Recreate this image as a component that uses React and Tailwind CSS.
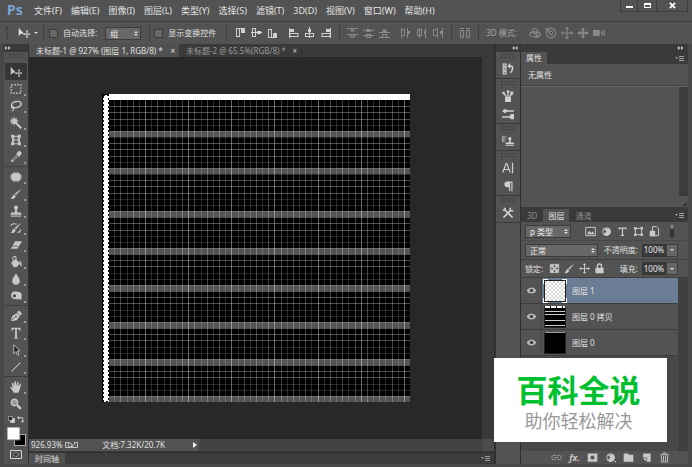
import { clsx } from "clsx";
import { useState } from "react";

const Icon = ({ children, className = "", box = 16 }) => (
  <svg viewBox={`0 0 ${box} ${box}`} fill="none" stroke="currentColor" strokeWidth="1.4" className={clsx("shrink-0", className)} aria-hidden="true">
    {children}
  </svg>
);

const solid = { fill: "currentColor", stroke: "none" };

const MovePath = () => (
  <>
    <path {...solid} d="M1 1v11l3-3h4z" />
    <path d="M12 5.500v8M8 9.500h8" strokeWidth="1.200" />
    <path {...solid} d="M12 4l1.800 2h-3.600zM12 15l1.800-2h-3.600zM6.800 9.500l2-1.800v3.600zM16 9.500l-1.500-1.800v3.600z" />
  </>
);
const BrushPath = () => <><path {...solid} d="M15.500 .5L8 9.500l-1.800-1.700z" /><path {...solid} d="M5.500 8.500l2 2c-.5 3.500-3 4.500-7 4 2.500-1 2-4.500 5-6z" /></>;
const FramePath = () => <><path d="M3.500 3.500h9v9h-9z" /><path {...solid} d="M1.500 1.500h3.500v3.500h-3.500zM11 1.500h3.500v3.500h-3.500zM1.500 11h3.500v3.500h-3.500zM11 11h3.500v3.500h-3.500z" /></>;
const StampPath = () => <><circle {...solid} cx="8" cy="3.500" r="2.800" /><path {...solid} d="M7 5h2l.6 5H15v3H1v-3h5.400z" /><path d="M1 14.800h14" /></>;

const tools = [
  [
    ["移动", <MovePath />],
    ["选框", <rect x="1.500" y="2.500" width="13" height="11" strokeDasharray="2.500 1.500" />],
    ["套索", <><ellipse cx="8.500" cy="6" rx="6.500" ry="4" transform="rotate(-12 8.500 6)" strokeWidth="2" /><path d="M4 8.500c-3 0-2.500 3 0 2.500s1 3-1.500 4" /></>],
    ["魔棒", <><path d="M7 7l8 8" strokeWidth="2.500" /><circle {...solid} cx="5.500" cy="5.500" r="3.500" /><path d="M5.500 0v11M0 5.500h11M1.700 1.700l7.600 7.600M9.300 1.700L1.700 9.300" /></>],
    ["裁剪", <><path d="M3.500 3v10M12.500 3v10M3 3h10M3 13h10M4 8h8M6 3l-2 10M10 3l2 10" /><path {...solid} d="M1.500 1h4v4h-4zM10.500 1h4v4h-4zM1.500 11h4v4h-4zM10.500 11h4v4h-4z" /></>],
    ["吸管", <><path d="M2 14l7-7" strokeWidth="2.800" /><path {...solid} d="M8 4l4 4 1-1.500c3-2 3-4 1.500-5.500s-3.500-1-5 1.500z" /><path d="M3.500 12.500l5-5" stroke="#535353" /></>],
  ],
  [
    ["修补", <><rect {...solid} x="2" y="3" width="12" height="10" rx="3" /><path d="M1 5.500h14M0 8h16M1 10.500h14M5 1.500v13M8 1v14M11 1.500v13" /></>],
    ["画笔", <BrushPath />],
    ["图章", <StampPath />],
    ["历史画笔", <><BrushPath /><path d="M1 5c2-4 5-3 8-2M10 14c3 0 4-2 4-4" /></>],
    ["橡皮擦", <><path {...solid} d="M7 3h9l-6 10H1z" /><path d="M2.500 9.500h7.500l1.500 2" stroke="#535353" strokeWidth="1" /></>],
    ["油漆桶", <><path {...solid} d="M1.500 9l6-5 6 6-5 5H5z" /><path d="M4 7V2.500C4 0 8 0 8 2.500V7" /><path {...solid} d="M12 6c3 1 4 4 3.500 8-2 0-2-3-2-4z" /></>],
    ["模糊", <path {...solid} d="M8 0c1 4 5 6 5 10.500a5 5 0 0 1-10 0C3 6 7 4 8 0z" />],
    ["海绵", <><path {...solid} d="M6.500 2C16 2 16.500 5 15 13l-3-1c-2 1-4 0-5.500 0a5 5 0 0 1 0-10z" /><ellipse cx="6" cy="7.500" rx="1.800" ry="2" fill="#333" stroke="none" /></>],
  ],
  [
    ["钢笔", <><path {...solid} d="M1 15L3 8l6-4 4 4-4 5.500z" /><path {...solid} d="M9.500 3l2.500-2.500L16 5l-2.500 2.500z" /><path d="M2 14l5-5" stroke="#535353" strokeWidth="1" /><circle cx="8" cy="8.500" r="1.200" fill="#535353" stroke="none" /></>],
    ["文字", <path {...solid} d="M2 1h12v4h-1c-.5-2-1.500-2.500-3.800-2.500v10.500c0 1 .5 1.500 2 1.500v.8H4.800v-.8c1.500 0 2-.5 2-1.500V2.500C4.500 2.500 3.500 3 3 5H2z" />],
    ["路径选择", <path d="M5 1v12l3-3 2 5 2-.8-2-5h3.500z" fill="#222" strokeWidth="1.200" />],
    ["直线", <path d="M2 14L14 2" />],
  ],
  [
    ["抓手", <path {...solid} d="M5 15.500C3 12 1 10 0 8c.8-1 2-.5 3.500 1.500L2.500 3c.6-1 1.500-.8 2 .2l1 3.600L6 1c.6-1 1.600-1 2 0l.2 5.500L10 1.500c.6-.8 1.500-.6 1.700.3L11 7l2.500-3.500c.9-.5 1.500 0 1.300.9-1 3-1.500 8-3.800 11.100z" />],
    ["缩放", <><circle cx="6" cy="6" r="4.300" fill="#999" strokeWidth="1.800" /><path d="M9.500 9.500l5 5" strokeWidth="3" /></>],
  ],
];

const menus = ["文件(F)", "编辑(E)", "图像(I)", "图层(L)", "类型(Y)", "选择(S)", "滤镜(T)", "3D(D)", "视图(V)", "窗口(W)", "帮助(H)"];

const Toolbox = () => {
  const [active, setActive] = useState("移动");
  return (
    <aside className="flex w-6 shrink-0 flex-col items-center bg-[#535353]">
      <div className="flex h-2 w-full items-center bg-[#3a3a3a] pl-px"><Chevrons right /></div>
      <Grip />
      <div className="h-[3px]" />
      {tools.map((group, index) => (
        <div key={group[0][0]} className={clsx("w-full px-px", index > 0 && "mt-px border-t border-[#3e3e3e] pt-px")}>
          {group.map(([label, drawing]) => (
            <button key={label} aria-label={label} onClick={() => setActive(label)} className={clsx("relative flex h-[17px] w-full items-center justify-center rounded-xs", active === label ? "bg-[#363636]" : "bg-transparent")}>
              <Icon className="h-3 w-3 text-[#c8c8c8]">{drawing}</Icon>
              {!["移动", "缩放"].includes(label) && <span className="absolute right-px bottom-px h-0.5 w-0.5 bg-[#999]" />}
            </button>
          ))}
        </div>
      ))}
      <div className="mt-1 flex w-full justify-between px-1 text-[#d2d2d2]">
        <Icon className="h-[7px] w-[7px]"><path d="M6 6h9v9H6z" fill="#ddd" /><path d="M1 1h9v9H1z" fill="#222" /></Icon>
        <Icon className="h-[7px] w-[7px]"><path d="M4 4h9v9" strokeWidth="2" /><path {...solid} d="M0 4l5-4v8zM13 16l-4-5h7z" /></Icon>
      </div>
      <div className="mt-1 h-[19px] w-[19px]">
        <svg viewBox="0 0 19 19" aria-label="前景色和背景色" role="img">
          <rect x="7.500" y="7.500" width="11" height="11" fill="#000" stroke="#aaa" />
          <rect width="13" height="13" fill="#fff" stroke="#666" />
        </svg>
      </div>
      <button aria-label="快速蒙版" className="mt-1 text-[#d2d2d2]">
        <svg viewBox="0 0 12 9" className="h-[9px] w-3" fill="none" stroke="currentColor"><path d="M.5.5h11v8H.5z" /><circle cx="6" cy="4.500" r="2" fill="#333" strokeDasharray="1 1" /></svg>
      </button>
    </aside>
  );
};

const Chevrons = ({ right }) => (
  <svg viewBox="0 0 6 4" className="h-1 w-1.5" fill="#c4c4c4">
    <path d={right ? "M0 0l2.500 2L0 4zM3 0l2.500 2L3 4z" : "M2.500 0L0 2l2.500 2zM5.500 0L3 2l2.500 2z"} />
  </svg>
);
const Grip = () => <div className="my-0.5 h-1 w-3.5 border-y border-dotted border-[#383838]" />;
const Divider = ({ className }) => <div className={clsx("h-4 w-px shrink-0 bg-[#3f3f3f]", className)} />;

const PanelMenu = () => (
  <button aria-label="面板菜单" className="ml-auto px-1">
    <svg viewBox="0 0 9 5" className="h-[5px] w-[9px]" fill="#a0a0a0"><path d="M0 1h3L1.500 3zM4 0h5v1H4zM4 2h5v1H4zM4 4h5v1H4z" /></svg>
  </button>
);

// rects are [x, y, w, h, filled]
const alignIcons = [
  { line: "M1 1.500h9", rects: [[1.5, 1.5, 3, 8], [6, 2, 4, 4, true]] },
  { line: "M0 5.500h11", rects: [[1.5, 1.5, 3, 8], [6, 4, 4, 3, true]] },
  { line: "M1 10.500h9", rects: [[1.5, 2.5, 3, 8], [6, 6, 4, 4, true]] },
  { line: "M1.500 1v10", rects: [[2, 6.5, 8, 3], [2, 2, 4, 3, true]] },
  { line: "M5.500 0v11", rects: [[1.5, 6.5, 8, 3], [4, 2, 3, 3, true]] },
  { line: "M10.500 1v10", rects: [[2, 6.5, 8, 3], [6, 2, 4, 3, true]] },
];
const distributeIcons = [
  { line: "M0 1.500h11M0 7.500h11", rects: [[3.5, 2.5, 4, 2, true], [3.5, 8, 4, 2]] },
  { line: "M0 3.500h11M0 8.500h11", rects: [[3.5, 2, 4, 3, true], [3.5, 7.5, 4, 3]] },
  { line: "M0 5.500h11M0 10.500h11", rects: [[3.5, 2.5, 4, 3, true], [3.5, 7.5, 4, 3]] },
  { line: "M1.500 1v10M7.500 1v10", rects: [[1.5, 2.5, 3, 6], [8, 4, 2, 3, true]] },
  { line: "M3.500 1v10M9.500 1v10", rects: [[1.5, 2.5, 4, 6], [8, 4, 2, 3, true]] },
  { line: "M5.500 1v10M10.500 1v10", rects: [[1.5, 2.5, 4, 6], [8, 4, 2, 3, true]] },
];

const AlignButtons = ({ icons, className }) => (
  <div className={clsx("flex gap-1", className)}>
    {icons.map(({ line, rects }, index) => (
      <button key={line} aria-label={`对齐 ${index + 1}`} className={clsx(index === 3 && "ml-[5px]")}>
        <Icon box={12} className="h-3 w-3">
          <path d={line} strokeWidth="1" />
          {rects.map(([x, y, w, h, filled]) => <rect key={`${x}-${y}`} x={x} y={y} width={w} height={h} strokeWidth={filled ? 0 : 1} fill={filled ? "currentColor" : "none"} />)}
        </Icon>
      </button>
    ))}
  </div>
);

const Select = ({ label, options, className }) => (
  <div className={clsx("relative", className)}>
    <select aria-label={label} className="h-[13px] w-full appearance-none border border-[#3c3c3c] bg-[#686868] px-1 text-[8px] leading-[11px] text-[#eee] outline-none">
      {options.map((option) => <option key={option}>{option}</option>)}
    </select>
    <svg viewBox="0 0 4 5" className="pointer-events-none absolute top-1 right-[3px] h-[5px] w-1" fill="#ddd"><path d="M0 2l2-2 2 2zM0 3h4L2 5z" /></svg>
  </div>
);

const Check = ({ label }) => (
  <label className="flex items-center gap-[5px] whitespace-nowrap">
    <input type="checkbox" className="h-[9px] w-[9px] appearance-none border border-[#3b3b3b] bg-[#686868] checked:bg-[#ccc]" />
    {label}
  </label>
);

const MenuBar = () => (
  <header className="flex h-[22px] shrink-0 border-b border-[#3c3c3c]">
    <div className="w-[34px] pl-[7px] text-[14px] leading-5 font-bold text-[#78a5d1]">Ps</div>
    <nav className="flex items-center gap-[9px] text-[9px] text-[#e4e4e4]">
      {menus.map((menu) => <button key={menu} className="whitespace-nowrap">{menu}</button>)}
    </nav>
    <div className="mr-1 ml-auto flex h-3 text-white">
      <button aria-label="最小化" className="flex w-[18px] items-end justify-center border border-t-0 border-[#3d3d3d] pb-[3px]"><span className="h-0.5 w-[7px] bg-white" /></button>
      <button aria-label="最大化" className="flex w-[18px] items-center justify-center border-b border-[#3d3d3d]"><span className="h-[5px] w-[7px] border border-t-2 border-white" /></button>
      <button aria-label="关闭" className="flex w-8 items-center justify-center border border-t-0 border-[#3d3d3d]"><Icon box={8} className="h-[7px] w-[7px]"><path d="M1 1l6 6M7 1L1 7" strokeWidth="2" /></Icon></button>
    </div>
  </header>
);

const OptionsBar = () => (
  <div className="flex h-[22px] shrink-0 items-center overflow-hidden text-[8px] text-[#e0e0e0]">
    <div className="ml-1.5 h-3 w-0.5 border-x border-dotted border-[#3a3a3a]" />
    <button aria-label="移动工具" className="ml-2.5 flex items-center gap-1"><Icon className="h-3 w-3"><MovePath /></Icon><span className="border-x-2 border-t-2 border-x-transparent border-t-[#ddd]" /></button>
    <Divider className="mx-[5px]" />
    <Check label="自动选择:" />
    <Select label="自动选择" options={["组", "图层"]} className="ml-2 w-9" />
    <Divider className="mr-1 ml-2" />
    <Check label="显示变换控件" />
    <Divider className="mr-2 ml-2.5" />
    <AlignButtons icons={alignIcons} className="text-[#d0d0d0]" />
    <Divider className="mx-[7px]" />
    <AlignButtons icons={distributeIcons} className="text-[#8a8a8a]" />
    <Divider className="mx-[7px]" />
    <Icon box={12} className="h-3 w-3 text-[#8a8a8a]"><path d="M1.500 3.500h3v7h-3zM7.500 3.500h3v7h-3zM1 1.500h4M7 1.500h4" strokeWidth="1" /></Icon>
    <Divider className="mx-[7px]" />
    <span className="whitespace-nowrap text-[#a5a5a5]">3D 模式:</span>
    <div className="ml-3 flex gap-1 text-[#8a8a8a]">
      <Icon className="h-3 w-3"><ellipse cx="8" cy="10" rx="7" ry="3.500" /><circle cx="8" cy="5.500" r="3.500" /><path {...solid} d="M8 11l4-1v5z" /></Icon>
      <Icon className="h-3 w-3"><circle cx="8" cy="8" r="6.500" /><circle cx="8" cy="8" r="2.500" /><path {...solid} d="M0 2h5v5z" /></Icon>
      <Icon className="h-3 w-3"><path d="M8 2v12M2 8h12" /><path d="M6 3l2-2.500L10 3M6 13l2 2.500L10 13M3 6L.5 8 3 10M13 6l2.500 2L13 10" /></Icon>
      <Icon className="h-3 w-3"><path d="M8 2v12M2 8h12" strokeWidth="2" /><path {...solid} d="M8 1l3 3H5zM8 15l3-3H5zM0 8l4-3v6zM16 8l-4-3v6zM6 6h4v4H6z" /></Icon>
      <Icon className="h-3 w-3"><path {...solid} d="M0 4h9v8H0zM10 8l3-4v8z" /><path d="M15 4v8" /></Icon>
    </div>
  </div>
);

const CELLS = 50;
const CELL = 6.16;
const bands = [6, 12, 19, 25, 31, 37, 43, 49];

const Artwork = () => {
  const size = CELLS * CELL;
  const lines = Array.from({ length: CELLS - 2 }, (_, index) => Math.round((index + 2) * CELL));
  return (
    <svg viewBox={`0 0 ${size} ${size}`} className="h-[308px] w-[308px] shrink-0" shapeRendering="crispEdges" role="img" aria-label="画布">
      <rect width={size} height={size} />
      {bands.map((row) => <rect key={row} x="7" y={Math.round(row * CELL)} width={size - 7} height="6" fill="#545454" />)}
      {lines.map((at, index) => (
        <g key={at} fill="#fff">
          <rect x={at} y="6" width="1" height={size - 6} opacity={index % 7 === 5 ? 0.4 : index % 2 ? 0.26 : 0.16} />
          <rect x="7" y={at} width={size - 7} height="1" opacity={index % 6 < 3 ? 0.3 : 0.14} />
        </g>
      ))}
      <rect x="7" y="0" width={size - 7} height="6" fill="#fff" />
      <rect x="1" y="1" width="6" height={size - 1} fill="#fff" />
      <rect x="1" y="1" width="5.500" height={size - 2} fill="none" stroke="#111" strokeWidth="1" strokeDasharray="2 2" />
    </svg>
  );
};

const DocumentArea = () => (
  <main className="flex min-w-0 flex-1 flex-col bg-[#3a3a3a]">
    <div className="flex h-[13px] text-[8px] leading-[13px] whitespace-nowrap">
      <button className="flex w-[150px] justify-between bg-[#505050] pr-1 pl-[7px] text-[#e0e0e0]"><span>未标题-1 @ 927% (图层 1, RGB/8) *</span><span>×</span></button>
      <button className="flex w-[123px] justify-between border-r border-[#303030] pr-1 pl-[7px] text-[#9a9a9a]"><span>未标题-2 @ 65.5%(RGB/8) *</span><span className="text-[#ccc]">×</span></button>
    </div>
    <div className="flex min-h-0 flex-1">
      <div className="min-w-0 flex-1 overflow-hidden bg-[#282828] pt-[37px] pl-[73px]"><Artwork /></div>
      <div className="w-3 bg-[#393939]" />
    </div>
    <div className="flex h-3 items-center bg-[#424242] text-[8px] leading-3 text-[#e0e0e0]">
      <div className="flex h-full w-[170px] items-center bg-[#535353] pl-0.5 whitespace-nowrap">
        <span>926.93%</span>
        <svg viewBox="0 0 13 6" className="ml-0.5 h-1.5 w-[13px]" fill="none" stroke="#c5c5c5"><path d="M4 .5H.5v5h12v-5H9" /><circle cx="5" cy="3" r="2" /><path d="M7 5l3-4" /></svg>
        <span className="ml-auto">文档:7.32K/20.7K</span>
        <svg viewBox="0 0 4 6" className="mr-0.5 ml-7 h-1.5 w-1" fill="#eee"><path d="M0 0l4 3-4 3z" /></svg>
      </div>
      <div className="ml-auto h-full w-3 bg-[#4b4b4b]" />
    </div>
    <div className="mt-px flex h-3 items-center border-t border-[#2d2d2d] bg-[#3c3c3c]">
      <button className="h-full bg-[#505050] px-1.5 text-[8px] leading-[11px] text-[#ddd]">时间轴</button>
      <PanelMenu />
    </div>
  </main>
);

const dockGroups = [
  [["历史记录", <><path d="M1.500 1.500h4v3h-4zM1.500 6.500h4v3h-4zM1.500 11.500h4v3h-4z" /><path d="M9 4h3c3 0 3 6-1 9" strokeWidth="2.200" /><path {...solid} d="M7 4l4-4v8z" /></>]],
  [
    ["画笔预设", <><path {...solid} d="M4 9h8v7H4z" /><path d="M6 9L2 4M8 9V1M10 9l4-5" strokeWidth="1.800" /><circle {...solid} cx="8" cy="2" r="1.800" /><circle {...solid} cx="2" cy="4" r="1.800" /><path {...solid} d="M11 2h4v4h-4z" /></>],
    ["画笔", <><path d="M6 4h10M0 12h10" strokeWidth="2" /><path {...solid} d="M0 4l4-3 4 3-4 3zM9 12l3-4h4v7h-4z" /></>],
  ],
  [["仿制源", <><g transform="translate(4 2) scale(.8)"><StampPath /></g><path d="M0 2.500h6M0 5.500h5M0 8.500h4M1 2v7" strokeWidth="1" /></>]],
  [
    ["字符", <path d="M1 14L5.500 2h1L11 14M3 10h6M14 1v14" strokeWidth="1.600" />],
    ["段落", <path {...solid} d="M7 2h7v13h-1.500V3.500H11V15H9.500V9.500H7a3.700 3.700 0 0 1 0-7.500z" />],
  ],
  [["工具预设", <><path d="M3 3l11 11" strokeWidth="2.200" /><path d="M12 4L2 14" strokeWidth="2.200" /><path d="M1 4.500l2.500-1L4.500 1M11 1v4h4" strokeWidth="2" /></>]],
];

const Dock = () => (
  <aside className="flex w-6 shrink-0 flex-col bg-[#535353]">
    <div className="flex h-2 items-center justify-end bg-[#3a3a3a] pr-0.5"><Chevrons /></div>
    {dockGroups.map((group) => (
      <div key={group[0][0]} className="flex flex-col items-center border-b border-[#3a3a3a]">
        <Grip />
        {group.map(([label, drawing]) => <button key={label} aria-label={label} className="flex h-[18px] items-center text-[#cfcfcf]"><Icon className="h-3 w-3">{drawing}</Icon></button>)}
      </div>
    ))}
  </aside>
);

const filterIcons = {
  像素: <><path d="M1 2h14v12H1z" /><path {...solid} d="M3 12l3-5 3 3 2-2 3 4z" /></>,
  调整: <><circle cx="8" cy="8" r="5.500" /><path {...solid} d="M12.500 3.500a6 6 0 0 1-9 9zM8 8L3.500 3.500 12.500 3.500z" /></>,
  文字: <path d="M3 5V3h10v2M8 3v11M5.500 13.500h5" strokeWidth="1.800" />,
  形状: <FramePath />,
  智能对象: <><path d="M5 1h6l3 3v10H5z" /><path {...solid} d="M1 7h8v8H1z" /></>,
};

const Percent = ({ label }) => (
  <label className="flex items-center gap-1 whitespace-nowrap">
    {label}
    <span className="flex h-[13px]">
      <input defaultValue="100%" className="w-6 border border-[#343434] bg-[#3a3a3a] text-center text-[8px] text-[#e5e5e5] outline-none" />
      <button aria-label={`${label}滑块`} className="flex w-3 items-center justify-center border border-[#3e3e3e] bg-[#666]"><span className="border-x-2 border-t-2 border-x-transparent border-t-[#ddd]" /></button>
    </span>
  </label>
);

const Thumb = ({ kind }) => (
  <svg viewBox="0 0 24 24" className="h-6 w-6" shapeRendering="crispEdges" aria-hidden="true">
    {kind === "empty" && <path d="M0 5V0h5M19 0h5v5M24 19v5h-5M5 24H0v-5" fill="none" stroke="#fff" strokeWidth="2" />}
    <rect x="1" y="1" width="22" height="22" fill="#222" />
    <rect x="2" y="2" width="20" height="20" fill={kind === "empty" ? "#fff" : "#000"} />
    {kind === "empty" && Array.from({ length: 50 }, (_, i) => <rect key={i} x={(i % 5) * 4 + (Math.floor(i / 5) % 2) * 2 + 2} y={Math.floor(i / 5) * 2 + 2} width="2" height="2" fill="#d6d6d6" />)}
    {kind === "lines" && <path d="M2 6.500h20M2 9.500h20M2 15.500h20M2 20.500h20" stroke="#ccc" strokeWidth="1" />}
    {kind === "lines" && <path d="M2 2h20" stroke="#fff" strokeWidth="2" strokeDasharray="5 1" />}
    {kind === "black" && <path d="M2 1.500h20" stroke="#999" />}
  </svg>
);

const layers = [
  { name: "图层 1", kind: "empty" },
  { name: "图层 0 拷贝", kind: "lines" },
  { name: "图层 0", kind: "black" },
];

const LayersPanel = () => {
  const [selected, setSelected] = useState("图层 1");
  return (
    <section className="mt-0.5 flex min-h-0 flex-1 flex-col bg-[#535353] text-[8px] text-[#e0e0e0]">
      <div className="flex h-[13px] shrink-0 items-center bg-[#3a3a3a] leading-[13px]">
        <button className="px-1.5 text-[#8b8b8b]">3D</button>
        <button className="bg-[#535353] px-[5px]">图层</button>
        <button className="px-1.5 text-[#8b8b8b]">通道</button>
        <PanelMenu />
      </div>
      <div className="flex h-[18px] shrink-0 items-center px-1">
        <Select label="图层类型" options={["ρ 类型", "ρ 名称"]} className="w-[46px]" />
        <div className="ml-3.5 flex gap-[5px] text-[#cacaca]">
          {Object.entries(filterIcons).map(([label, drawing]) => <button key={label} aria-label={label}><Icon className="h-[11px] w-[11px]">{drawing}</Icon></button>)}
        </div>
        <span className="mr-2.5 ml-auto h-3 w-1 border border-[#333] border-t-4 border-t-[#888] bg-[#333]" />
      </div>
      <div className="flex h-[19px] shrink-0 items-center justify-between border-t border-[#494949] pr-2.5 pl-1">
        <Select label="混合模式" options={["正常", "溶解", "变暗"]} className="w-[73px]" />
        <Percent label="不透明度:" />
      </div>
      <div className="flex h-[19px] shrink-0 items-center border-y border-[#3f3f3f] pr-2.5 pl-1">
        <span>锁定:</span>
        <div className="ml-1.5 flex gap-1 text-[#cacaca]">
          <button aria-label="锁定透明像素"><Icon className="h-[11px] w-[11px]"><path d="M2 2h12v12H2z" /><path {...solid} d="M3 3h4v4H3zM9 3h4v4H9zM6 6h4v4H6zM3 9h4v4H3zM9 9h4v4H9z" /></Icon></button>
          <button aria-label="锁定图像像素"><Icon className="h-[11px] w-[11px]"><BrushPath /></Icon></button>
          <button aria-label="锁定位置"><Icon className="h-[11px] w-[11px]"><path d="M8 1v14M1 8h14M6 3l2-2 2 2M6 13l2 2 2-2M3 6L1 8l2 2M13 6l2 2-2 2" /></Icon></button>
          <button aria-label="锁定全部"><Icon className="h-[11px] w-[11px]"><path d="M5 8V4.500a3 3 0 0 1 6 0V8" strokeWidth="2" /><path {...solid} d="M2 7h12v8H2z" /></Icon></button>
        </div>
        <div className="ml-auto"><Percent label="填充:" /></div>
      </div>
      <div className="flex min-h-0 flex-1 bg-[#484848]">
        <ul className="min-w-0 flex-1">
          {layers.map(({ name, kind }) => (
            <li key={name} className={clsx("flex h-[26px] items-center border-b border-[#3d3d3d]", selected === name ? "bg-[#6b7d94]" : "bg-[#535353]")}>
              <button aria-label={`显示 ${name}`} className="flex h-full w-[21px] items-center justify-center border-r border-[#444] bg-[#535353]">
                <Icon box={12} className="h-[9px] w-[9px] text-[#c0c0c0]"><path d="M.5 6C3 1.500 9 1.500 11.500 6 9 10.500 3 10.500.5 6z" fill="#aaa" /><circle cx="6" cy="6" r="2" fill="#333" stroke="none" /></Icon>
              </button>
              <button onClick={() => setSelected(name)} className="flex h-full flex-1 items-center gap-[5px] pl-px"><Thumb kind={kind} />{name}</button>
            </li>
          ))}
        </ul>
        <div className="w-2.5 bg-[#404040]" />
      </div>
      <div className="flex h-[13px] shrink-0 items-center justify-end gap-[7px] pr-[18px] text-[#c9c9c9]">
        <button aria-label="链接图层"><Icon className="h-[11px] w-[11px] text-[#999]"><path d="M7 11H4a3 3 0 0 1 0-6h3M9 5h3a3 3 0 0 1 0 6H9M5 8h6" /></Icon></button>
        <button aria-label="图层样式" className="text-[9px] leading-3 font-bold italic">fx.</button>
        <button aria-label="图层蒙版"><Icon className="h-[11px] w-[11px]"><path {...solid} fillRule="evenodd" d="M1 2h14v12H1zM8 5a3 3 0 1 0 0 6 3 3 0 0 0 0-6z" /></Icon></button>
        <button aria-label="调整图层"><Icon className="h-[11px] w-[11px]">{filterIcons.调整}<path {...solid} d="M14 13h2v2h-2z" /></Icon></button>
        <button aria-label="新建组"><Icon className="h-[11px] w-[11px]"><path {...solid} d="M1 2h6l2 2h6v10H1z" /></Icon></button>
        <button aria-label="新建图层"><Icon className="h-[11px] w-[11px]"><path {...solid} d="M3 2h11v12H9V8H3z" /><path {...solid} d="M3 9h5v5z" /></Icon></button>
        <button aria-label="删除"><Icon className="h-[11px] w-[11px]"><path d="M2 4h12M6 3V1.500h4V3M3.500 5v9.500h9V5M6.500 6v7M9.500 6v7" /></Icon></button>
      </div>
    </section>
  );
};

const RightPanels = () => (
  <aside className="flex w-[167px] shrink-0 flex-col bg-[#3a3a3a]">
    <div className="flex h-2 shrink-0 items-center justify-end pr-1"><Chevrons right /></div>
    <section className="shrink-0 text-[8px] text-[#e4e4e4]">
      <div className="flex h-3 items-center"><button className="bg-[#535353] px-[5px] leading-3">属性</button><PanelMenu /></div>
      <h2 className="border-b border-[#444] bg-[#535353] py-1 pl-[7px] leading-[13px]">无属性</h2>
      <div className="flex h-[121px] justify-end border-t border-[#656565] bg-[#535353]">
        <div className="flex w-[9px] flex-col">
          <div className="flex-1 bg-[#3c3c3c]" />
          <svg viewBox="0 0 9 11" className="h-[11px] w-[9px]" fill="#333"><path d="M8 6v4H3z" /></svg>
        </div>
      </div>
    </section>
    <LayersPanel />
  </aside>
);

const Banner = () => (
  <div className="absolute right-[25px] bottom-[25px] flex h-[84px] w-[173px] flex-col items-center bg-white pt-4 pr-1 font-['Liberation_Sans','Noto_Sans_CJK_SC',sans-serif]">
    <strong className="text-[31px] leading-9 font-bold text-[#00c030]">百科全说</strong>
    <span className="text-[18px] leading-6 text-[#999]">助你轻松解决</span>
  </div>
);

export default function App() {
  return (
    <div className="relative flex h-screen flex-col overflow-hidden bg-[#535353] font-['Noto_Sans','Noto_Sans_CJK_SC',sans-serif]">
      <MenuBar />
      <OptionsBar />
      <div className="flex min-h-0 flex-1 border-x-4 border-b-[3px] border-[#484848] bg-[#303030]">
        <Toolbox />
        <div className="w-px shrink-0" />
        <DocumentArea />
        <div className="w-0.5 shrink-0" />
        <Dock />
        <div className="w-px shrink-0" />
        <RightPanels />
      </div>
      <Banner />
    </div>
  );
}
